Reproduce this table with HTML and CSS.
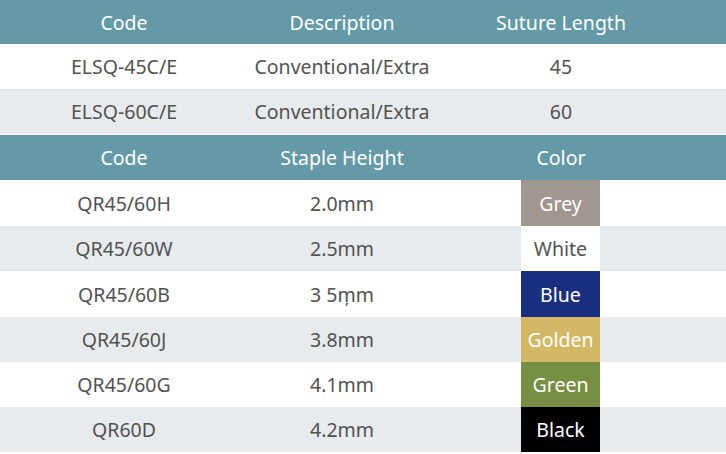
FILE: index.html
```html
<!DOCTYPE html>
<html>
<head>
<meta charset="utf-8">
<link rel="stylesheet" href="styles.css">
</head>
<body>
<div class="sheet">
  <table class="spec">
    <colgroup><col class="c1"><col class="c2"><col class="c3"><col class="c4"></colgroup>
    <tr class="head first"><th>Code</th><th>Description</th><th>Suture Length</th><th></th></tr>
    <tr class="row"><td>ELSQ-45C/E</td><td>Conventional/Extra</td><td>45</td><td></td></tr>
    <tr class="row alt"><td>ELSQ-60C/E</td><td>Conventional/Extra</td><td>60</td><td></td></tr>
  </table>
  <div class="divider"></div>
  <table class="spec">
    <colgroup><col class="c1"><col class="c2"><col class="c3"><col class="c4"></colgroup>
    <tr class="head"><th>Code</th><th>Staple Height</th><th>Color</th><th></th></tr>
    <tr class="row tall"><td>QR45/60H</td><td>2.0mm</td><td class="sw"><div class="swatch grey">Grey</div></td><td></td></tr>
    <tr class="row alt"><td>QR45/60W</td><td>2.5mm</td><td class="sw"><div class="swatch white">White</div></td><td></td></tr>
    <tr class="row tall"><td>QR45/60B</td><td>3 5m̦m</td><td class="sw"><div class="swatch blue">Blue</div></td><td></td></tr>
    <tr class="row alt"><td>QR45/60J</td><td>3.8mm</td><td class="sw"><div class="swatch golden">Golden</div></td><td></td></tr>
    <tr class="row"><td>QR45/60G</td><td>4.1mm</td><td class="sw"><div class="swatch green">Green</div></td><td></td></tr>
    <tr class="row alt"><td>QR60D</td><td>4.2mm</td><td class="sw"><div class="swatch black">Black</div></td><td></td></tr>
  </table>
</div>
</body>
</html>
```
FILE: styles.css
```css
html, body {
  margin: 0;
  padding: 0;
  background: #ffffff;
}
.sheet {
  width: 726px;
  font-family: "Noto Sans", "Open Sans", sans-serif;
  font-size: 19.5px;
}
.spec {
  width: 726px;
  border-collapse: collapse;
  table-layout: fixed;
}
.c1 { width: 248px; }
.c2 { width: 188px; }
.c3 { width: 250px; }
.c4 { width: 40px; }
.spec th, .spec td {
  padding: 0;
  text-align: center;
  vertical-align: middle;
  white-space: nowrap;
}
.head {
  background: #6499a8;
  color: #ffffff;
  height: 45px;
}
.head th { font-weight: 400; }
.head.first { height: 44px; }
.row {
  height: 45px;
  color: #525252;
  background: #ffffff;
}
.row.tall { height: 46px; }
.row.alt { background: #e8ebee; }
.divider {
  height: 1px;
  background: #f2f4f5;
}
.swatch {
  width: 79px;
  height: 45px;
  margin: 0 auto 0 85px;
  display: flex;
  align-items: center;
  justify-content: center;
  color: #ffffff;
}
.tall .swatch { height: 46px; }
.grey { background: #a09890; }
.white { background: #ffffff; color: #525252; }
.blue { background: #1b2f80; }
.golden { background: #d3b865; }
.green { background: #768f43; }
.black { background: #000000; }
```
